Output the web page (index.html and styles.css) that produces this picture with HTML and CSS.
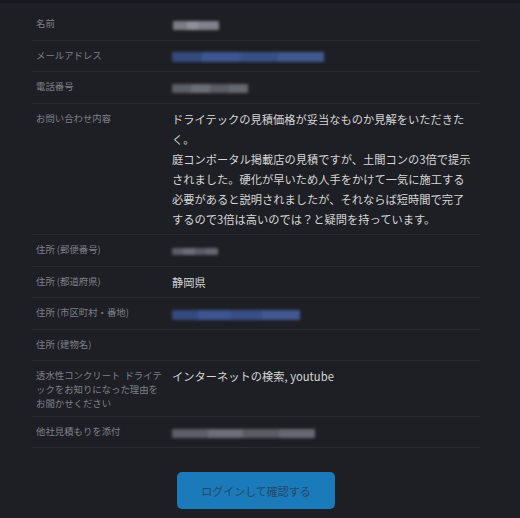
FILE: index.html
```html
<!DOCTYPE html>
<html lang="ja">
<head>
<meta charset="utf-8">
<title>お問い合わせ内容</title>
<link rel="stylesheet" href="styles.css">
</head>
<body>
<div class="topband"></div>
<div class="list">
  <div class="row">
    <div class="label">名前</div>
    <div class="value"><span class="redact grey w46"></span></div>
  </div>
  <div class="row">
    <div class="label">メールアドレス</div>
    <div class="value"><span class="redact blue w152"></span></div>
  </div>
  <div class="row">
    <div class="label">電話番号</div>
    <div class="value"><span class="redact dim w76"></span></div>
  </div>
  <div class="row">
    <div class="label">お問い合わせ内容</div>
    <div class="value">ドライテックの見積価格が妥当なものか見解をいただきたく。<br>庭コンポータル掲載店の見積ですが、土間コンの3倍で提示されました。硬化が早いため人手をかけて一気に施工する必要があると説明されましたが、それならば短時間で完了するので3倍は高いのでは？と疑問を持っています。</div>
  </div>
  <div class="row">
    <div class="label">住所 (郵便番号)</div>
    <div class="value"><span class="redact dim w46 thin"></span></div>
  </div>
  <div class="row">
    <div class="label">住所 (都道府県)</div>
    <div class="value">静岡県</div>
  </div>
  <div class="row">
    <div class="label">住所 (市区町村・番地)</div>
    <div class="value"><span class="redact blue w128"></span></div>
  </div>
  <div class="row">
    <div class="label">住所 (建物名)</div>
    <div class="value"></div>
  </div>
  <div class="row">
    <div class="label">透水性コンクリート <span class="gap"></span>ドライテ<br>ックをお知りになった理由を<br>お聞かせください</div>
    <div class="value">インターネットの検索, youtube</div>
  </div>
  <div class="row">
    <div class="label">他社見積もりを添付</div>
    <div class="value"><span class="redact dim w143"></span></div>
  </div>
  <div class="actions">
    <button class="btn" type="button">ログインして確認する</button>
  </div>
</div>
</body>
</html>
```
FILE: styles.css
```css
* { box-sizing: border-box; }
html, body { margin: 0; padding: 0; }
body {
  background: #1e1f24;
  font-family: "Noto Sans CJK JP", "Noto Sans", sans-serif;
  width: 520px;
  height: 518px;
  overflow: hidden;
}
.topband {
  height: 3px;
  background: #17181c;
}
.list {
  margin: 6px 0 0 32px;
  width: 448px;
}
.row {
  display: grid;
  grid-template-columns: 140px 300px;
  padding: 5px 0 5.5px;
  border-bottom: 1px solid #2a2b31;
}
.label {
  padding: 2px 0 0 4px;
  font-size: 9.4px;
  line-height: 14px;
  color: #7d8088;
  white-space: nowrap;
}
.gap {
  display: inline-block;
  width: 2px;
}
.value {
  font-size: 11.25px;
  line-height: 20px;
  min-height: 20px;
  color: #d6d6d6;
}
.redact {
  display: inline-block;
  height: 9px;
  vertical-align: middle;
  filter: blur(1.6px);
  border-radius: 1px;
}
.redact.thin { height: 7px; }
.grey { background: linear-gradient(90deg, #7a7d85 0 30%, #8e9198 30% 55%, #7f828a 55% 100%); margin-left: 1px; }
.dim { background: linear-gradient(90deg, #5c5e66 0 25%, #6b6e75 25% 50%, #5a5c63 50% 75%, #666870 75% 100%); }
.blue { background: linear-gradient(90deg, #34497c 0 20%, #3d5590 20% 45%, #384f86 45% 70%, #40588f 70% 100%); height: 10px; }
.w46 { width: 46px; }
.w76 { width: 76px; }
.w128 { width: 128px; }
.w143 { width: 143px; }
.w152 { width: 152px; }
.actions {
  display: flex;
  justify-content: center;
  padding-top: 24px;
}
.btn {
  width: 158px;
  height: 37px;
  border: none;
  border-radius: 5px;
  background: #1a7aba;
  color: #284767;
  font-family: "Noto Sans CJK JP", "Noto Sans", sans-serif;
  font-size: 11px;
  padding: 0;
}
```
